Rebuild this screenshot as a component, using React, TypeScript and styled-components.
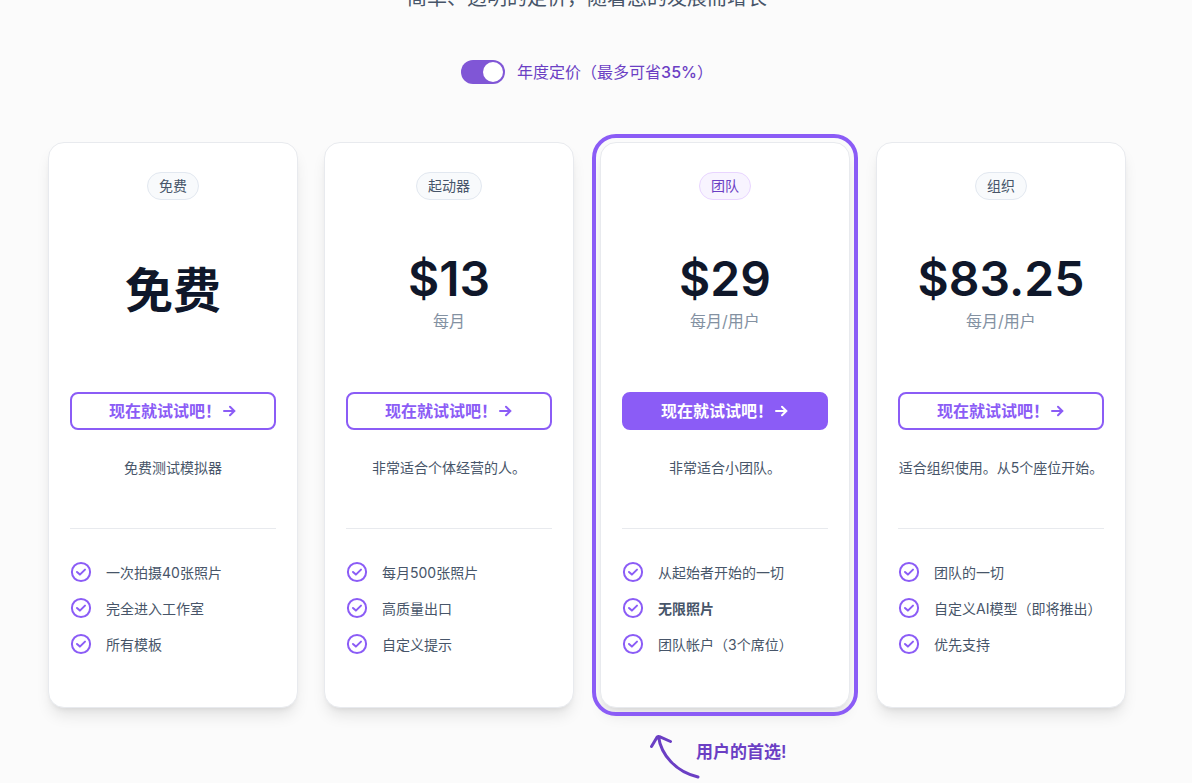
import React, { useState } from "react";
import styled, { createGlobalStyle, css } from "styled-components";

const GlobalStyle = createGlobalStyle`
  *, *::before, *::after { box-sizing: border-box; }
  body {
    margin: 0;
    background: #fbfbfb;
    color: #475569;
    font-family: Inter, "Noto Sans CJK SC", sans-serif;
    font-size: 14px;
    line-height: 20px;
    overflow: hidden;
  }
`;

const Page = styled.main`
  display: flex;
  flex-direction: column;
  padding: 0 66px 0 48px;
`;

const Subtitle = styled.p`
  margin: -16px 0 0;
  font-size: 20px;
  line-height: 28px;
  text-align: center;
`;

const BillingToggle = styled.label`
  display: flex;
  align-items: center;
  justify-content: center;
  gap: 12px;
  margin: 48px 0 58px;
  font-size: 16px;
  line-height: 24px;
  color: #6b3fc4;
  cursor: pointer;
`;

const Switch = styled.input`
  appearance: none;
  flex: none;
  display: flex;
  width: 44px;
  height: 24px;
  margin: 0;
  padding: 2px;
  border-radius: 12px;
  background: #cbd5e1;
  cursor: pointer;

  &::before {
    content: "";
    width: 20px;
    height: 20px;
    border-radius: 50%;
    background: #fff;
  }

  &:checked {
    justify-content: flex-end;
    background: #8056d6;
  }
`;

const Savings = styled.span`
  font-weight: 500;
`;

const Plans = styled.div`
  display: grid;
  grid-template-columns: repeat(4, minmax(0, 1fr));
  gap: 26px;
`;

const Card = styled.article<{ $featured?: boolean }>`
  display: flex;
  flex-direction: column;
  align-items: center;
  padding: 29px 21px 49px;
  border: 1px solid #e8eaee;
  border-radius: 16px;
  background: #fff;
  box-shadow: 0 10px 15px -3px rgba(0, 0, 0, 0.1), 0 4px 6px -4px rgba(0, 0, 0, 0.1);
  ${(p) => p.$featured && css`
    outline: 4px solid #8b5cf6;
    outline-offset: 4px;
  `}
`;

const Badge = styled.h2<{ $featured?: boolean }>`
  margin: 0;
  padding: 3px 11px;
  border: 1px solid ${(p) => (p.$featured ? "#e9d5ff" : "#e2e8f0")};
  border-radius: 14px;
  background: ${(p) => (p.$featured ? "#f8f4ff" : "#f8fafc")};
  color: ${(p) => (p.$featured ? "#6b3fc4" : "#475569")};
  font-size: 14px;
  line-height: 20px;
  font-weight: 400;
`;

const PriceBlock = styled.div`
  display: flex;
  flex-direction: column;
  align-items: center;
  justify-content: center;
  height: 182px;
  margin-bottom: 10px;
`;

const Price = styled.p`
  margin: 0;
  color: #0f172a;
  font-size: 48px;
  line-height: 60px;
  font-weight: 600;
`;

const Period = styled.p`
  margin: 0;
  color: #8391a2;
  font-size: 16px;
  line-height: 24px;
`;

const TryButton = styled.button<{ $featured?: boolean }>`
  display: flex;
  align-items: center;
  justify-content: center;
  width: 100%;
  height: 38px;
  padding: 0;
  border: 2px solid #8b5cf6;
  border-radius: 8px;
  background: ${(p) => (p.$featured ? "#8b5cf6" : "#fff")};
  color: ${(p) => (p.$featured ? "#fff" : "#8b5cf6")};
  font: inherit;
  font-size: 16px;
  line-height: 24px;
  font-weight: 600;
  cursor: pointer;
`;

const Summary = styled.p`
  width: 100%;
  height: 71px;
  margin: 28px 0 31px;
  border-bottom: 1px solid #e8eaee;
  text-align: center;
  white-space: nowrap;
`;

const Features = styled.ul`
  display: flex;
  flex-direction: column;
  gap: 10px;
  width: 100%;
  margin: 0;
  padding: 0;
  list-style: none;
`;

const Feature = styled.li<{ $strong?: boolean }>`
  display: flex;
  align-items: flex-start;
  gap: 13px;
  line-height: 26px;
  font-weight: ${(p) => (p.$strong ? 600 : 400)};
  white-space: nowrap;
`;

const CheckSvg = styled.svg`
  flex: none;
  width: 24px;
  height: 24px;
  margin-left: -1px;
  color: #8b5cf6;
`;

const Favourite = styled.aside`
  display: grid;
  grid-template-columns: repeat(4, minmax(0, 1fr));
  gap: 26px;
  margin-top: 24px;
`;

const FavouriteNote = styled.p`
  grid-column: 3;
  display: flex;
  align-items: flex-start;
  margin: 0 0 0 46px;
  color: #6b3fc4;
  font-size: 17px;
  line-height: 24px;
  font-weight: 600;
  white-space: nowrap;
`;

const HandArrowSvg = styled.svg`
  flex: none;
  width: 50px;
  height: 48px;
  overflow: visible;
`;

const NoteText = styled.span`
  margin-top: 8px;
`;

function Check() {
  return (
    <CheckSvg viewBox="0 0 24 24" fill="none" stroke="currentColor" strokeWidth="2" strokeLinecap="round" strokeLinejoin="round" aria-hidden="true">
      <circle cx="12" cy="12" r="9.1" />
      <path d="M8 12l2.900 2.600L16 9.600" />
    </CheckSvg>
  );
}

function Arrow() {
  return (
    <svg width="16" height="16" viewBox="0 0 16 16" fill="none" stroke="currentColor" strokeWidth="2" strokeLinecap="round" strokeLinejoin="round" aria-hidden="true">
      <path d="M3 8h10.500M9 3.800l4.300 4.200L9 12.200" />
    </svg>
  );
}

function HandArrow() {
  return (
    <HandArrowSvg viewBox="0 0 50 48" fill="none" stroke="currentColor" strokeWidth="3" strokeLinecap="round" strokeLinejoin="round" aria-hidden="true">
      <path d="M5.500 14.500L11 5.200Q12 4 13.500 4.600L24.500 9.500M12.500 4.500C15 23 30 40 52 45" />
    </HandArrowSvg>
  );
}

type Plan = {
  name: string;
  price: string;
  period?: string;
  summary: string;
  features: { text: string; strong?: boolean }[];
  featured?: boolean;
};

const plans: Plan[] = [
  {
    name: "免费",
    price: "免费",
    summary: "免费测试模拟器",
    features: [{ text: "一次拍摄40张照片" }, { text: "完全进入工作室" }, { text: "所有模板" }],
  },
  {
    name: "起动器",
    price: "$13",
    period: "每月",
    summary: "非常适合个体经营的人。",
    features: [{ text: "每月500张照片" }, { text: "高质量出口" }, { text: "自定义提示" }],
  },
  {
    name: "团队",
    price: "$29",
    period: "每月/用户",
    summary: "非常适合小团队。",
    features: [{ text: "从起始者开始的一切" }, { text: "无限照片", strong: true }, { text: "团队帐户（3个席位）" }],
    featured: true,
  },
  {
    name: "组织",
    price: "$83.25",
    period: "每月/用户",
    summary: "适合组织使用。从5个座位开始。",
    features: [{ text: "团队的一切" }, { text: "自定义AI模型（即将推出）" }, { text: "优先支持" }],
  },
];

export default function App() {
  const [yearly, setYearly] = useState(true);
  return (
    <Page lang="zh-CN">
      <GlobalStyle />
      <Subtitle>简单、透明的定价，随着您的发展而增长</Subtitle>
      <BillingToggle>
        <Switch type="checkbox" role="switch" checked={yearly} onChange={(e) => setYearly(e.target.checked)} />
        <span>年度定价（最多可省<Savings>35%</Savings>）</span>
      </BillingToggle>
      <Plans>
        {plans.map((plan) => (
          <Card key={plan.name} $featured={plan.featured}>
            <Badge $featured={plan.featured}>{plan.name}</Badge>
            <PriceBlock>
              <Price>{plan.price}</Price>
              {plan.period && <Period>{plan.period}</Period>}
            </PriceBlock>
            <TryButton type="button" $featured={plan.featured}>
              现在就试试吧！
              <Arrow />
            </TryButton>
            <Summary>{plan.summary}</Summary>
            <Features>
              {plan.features.map((f) => (
                <Feature key={f.text} $strong={f.strong}>
                  <Check />
                  {f.text}
                </Feature>
              ))}
            </Features>
          </Card>
        ))}
      </Plans>
      <Favourite>
        <FavouriteNote>
          <HandArrow />
          <NoteText>用户的首选!</NoteText>
        </FavouriteNote>
      </Favourite>
    </Page>
  );
}
